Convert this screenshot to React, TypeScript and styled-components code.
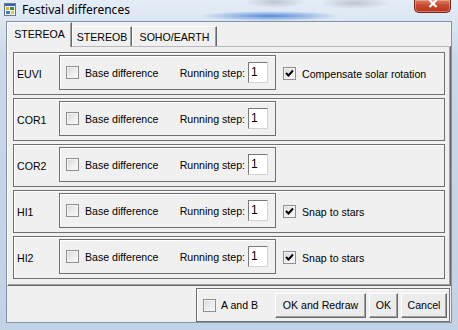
import React from 'react';
import styled, { createGlobalStyle } from 'styled-components';

const GlobalStyle = createGlobalStyle`
  html, body {
    margin: 0;
    padding: 0;
    background: #fff;
  }
  body {
    font-family: 'Liberation Sans', Arial, sans-serif;
    font-size: 10.6px;
    color: #000;
  }
  * {
    box-sizing: border-box;
  }
`;

const instruments = [
  { name: 'EUVI', extra: 'Compensate solar rotation' },
  { name: 'COR1' },
  { name: 'COR2' },
  { name: 'HI1', extra: 'Snap to stars' },
  { name: 'HI2', extra: 'Snap to stars' },
];

const Frame = styled.div`
  width: 458px;
  height: 330px;
  display: flex;
  flex-direction: column;
  background:
    radial-gradient(ellipse 70px 5px at 270px 16px, rgba(40, 110, 210, 0.75), rgba(40, 110, 210, 0) 100%),
    radial-gradient(ellipse 30px 6px at 275px 2px, rgba(150, 160, 175, 0.5), rgba(150, 160, 175, 0) 100%),
    radial-gradient(ellipse 35px 6px at 355px 3px, rgba(150, 160, 175, 0.5), rgba(150, 160, 175, 0) 100%),
    linear-gradient(to bottom, #e4ecf6 0, #dde7f2 20px, #c9d8ea 60px, #c2d3e7 100%);
`;

const TitleBar = styled.div`
  height: 21px;
  display: flex;
  align-items: flex-start;
  padding-left: 4px;
`;

const AppIcon = styled.svg`
  margin-top: 3px;
  flex: none;
`;

const Title = styled.span`
  margin-left: 6px;
  font-family: 'Noto Sans', 'Open Sans', sans-serif;
  font-size: 12px;
  line-height: 20px;
  color: #000;
`;

const CloseButton = styled.div`
  margin-left: auto;
  margin-right: 7px;
  width: 37px;
  height: 13px;
  border: 1px solid #6e2a1e;
  border-top: none;
  border-radius: 0 0 5px 5px;
  background: linear-gradient(to bottom, #d8826c 0, #c9492f 45%, #b8341d 100%);
  box-shadow: inset 0 0 0 1px rgba(255, 200, 180, 0.45);
  display: flex;
  justify-content: center;
`;

const Client = styled.div`
  flex: 1;
  margin: 0 6px 7px 6px;
  border: 1px solid #8193aa;
  background: #f0f0f0;
  display: flex;
  flex-direction: column;
`;

const TabStrip = styled.div`
  height: 24px;
  display: flex;
  align-items: flex-end;
  position: relative;
  z-index: 1;
`;

const Tab = styled.div<{ $active?: boolean; $width: number }>`
  width: ${p => p.$width}px;
  height: ${p => (p.$active ? 25 : 20)}px;
  margin-bottom: ${p => (p.$active ? -1 : 0)}px;
  padding-bottom: ${p => (p.$active ? 2 : 0)}px;
  background: #f0f0f0;
  border-top: 1px solid #fff;
  border-left: 1px solid #fff;
  border-right: 1px solid #696969;
  box-shadow: inset -1px 0 0 #a0a0a0;
  display: flex;
  align-items: center;
  justify-content: center;
  white-space: nowrap;
`;

const Panel = styled.div`
  height: 240px;
  flex: none;
  border-top: 1px solid #b9b9b9;
  border-left: 1px solid #fff;
  border-right: 1px solid #696969;
  border-bottom: 1px solid #696969;
  box-shadow: inset -1px -1px 0 #a0a0a0;
  padding: 5px 5px 0 5px;
  display: flex;
  flex-direction: column;
  gap: 3px;
`;

const Row = styled.div`
  height: 43px;
  border: 1px solid #6f6f6f;
  box-shadow: inset 1px 1px 0 #fff;
  display: flex;
  align-items: flex-start;
`;

const RowLabel = styled.span`
  width: 45px;
  padding-left: 3px;
  align-self: center;
`;

const Inner = styled.div`
  width: 217px;
  height: 35px;
  margin-top: 2px;
  border: 1px solid #6f6f6f;
  box-shadow: inset 1px 1px 0 #fff;
  display: flex;
  align-items: center;
  justify-content: space-between;
  padding: 0 7px 0 6px;
`;

const CheckField = styled.label<{ $gap?: number }>`
  display: flex;
  align-items: center;
  gap: ${p => p.$gap ?? 6}px;
  white-space: nowrap;
`;

const Extra = styled(CheckField)`
  margin-left: 7px;
  align-self: center;
`;

const Box = styled.span`
  width: 13px;
  height: 13px;
  flex: none;
  border: 1px solid #8e8f8f;
  background: linear-gradient(135deg, #d6d6d6 0, #ececec 50%, #fbfbfb 100%);
  box-shadow: inset 0 0 0 1px #f4f4f4;
  display: flex;
  align-items: center;
  justify-content: center;
`;

const StepField = styled.div`
  display: flex;
  align-items: center;
  gap: 3px;
  white-space: nowrap;
`;

const StepInput = styled.div`
  width: 20px;
  height: 21px;
  background: #fff;
  border: 1px solid #7a7a7a;
  border-right-color: #d4d4d4;
  border-bottom-color: #d4d4d4;
  padding-left: 2px;
  font-size: 12px;
  line-height: 19px;
`;

const Footer = styled.div`
  flex: 1;
  display: flex;
  justify-content: flex-end;
  padding: 2px 1px 0 0;
`;

const ButtonGroup = styled.div`
  width: 254px;
  border: 1px solid #6f6f6f;
  box-shadow: inset 1px 1px 0 #fff;
  display: flex;
  align-items: center;
  padding: 0 2px 0 6px;
`;

const Buttons = styled.div`
  margin-left: auto;
  display: flex;
  gap: 3px;
`;

const Button = styled.div<{ $width: number }>`
  width: ${p => p.$width}px;
  height: 25px;
  background: #ececec;
  border: 1px solid;
  border-color: #fff #696969 #696969 #fff;
  box-shadow: inset -1px -1px 0 #a0a0a0;
  display: flex;
  align-items: center;
  justify-content: center;
  white-space: nowrap;
`;

const Check = ({ checked }: { checked?: boolean }) => (
  <Box>
    {checked && (
      <svg width="9" height="9" viewBox="0 0 9 9">
        <path d="M1 4 L3.5 6.5 L8 1.5" fill="none" stroke="#000" strokeWidth="2" />
      </svg>
    )}
  </Box>
);

export default function App() {
  return (
    <>
      <GlobalStyle />
      <Frame>
        <TitleBar>
          <AppIcon width="12" height="13" viewBox="0 0 12 13">
            <rect x="0.5" y="0.5" width="11" height="12" fill="#f2f2e6" stroke="#6b7a8a" />
            <rect x="1" y="1" width="10" height="2" fill="#3a5fb8" />
            <rect x="2" y="4" width="3" height="3" fill="#d9b13a" />
            <rect x="6" y="4" width="4" height="3" fill="#3d8a4a" />
            <rect x="2" y="8" width="4" height="3" fill="#4a78c8" />
            <rect x="7" y="8" width="3" height="3" fill="#c8d25a" />
          </AppIcon>
          <Title>Festival differences</Title>
          <CloseButton>
            <svg width="10" height="8" viewBox="0 0 10 8">
              <path d="M1.5 0 L8.5 7 M8.5 0 L1.5 7" stroke="#fff" strokeWidth="2.2" />
            </svg>
          </CloseButton>
        </TitleBar>
        <Client>
          <TabStrip>
            <Tab $active $width={65}>STEREOA</Tab>
            <Tab $width={60}>STEREOB</Tab>
            <Tab $width={85}>SOHO/EARTH</Tab>
          </TabStrip>
          <Panel>
            {instruments.map(inst => (
              <Row key={inst.name}>
                <RowLabel>{inst.name}</RowLabel>
                <Inner>
                  <CheckField>
                    <Check />
                    Base difference
                  </CheckField>
                  <StepField>
                    Running step:
                    <StepInput>1</StepInput>
                  </StepField>
                </Inner>
                {inst.extra && (
                  <Extra>
                    <Check checked />
                    {inst.extra}
                  </Extra>
                )}
              </Row>
            ))}
          </Panel>
          <Footer>
            <ButtonGroup>
              <CheckField $gap={5}>
                <Check />
                A and B
              </CheckField>
              <Buttons>
                <Button $width={91}>OK and Redraw</Button>
                <Button $width={29}>OK</Button>
                <Button $width={46}>Cancel</Button>
              </Buttons>
            </ButtonGroup>
          </Footer>
        </Client>
      </Frame>
    </>
  );
}
